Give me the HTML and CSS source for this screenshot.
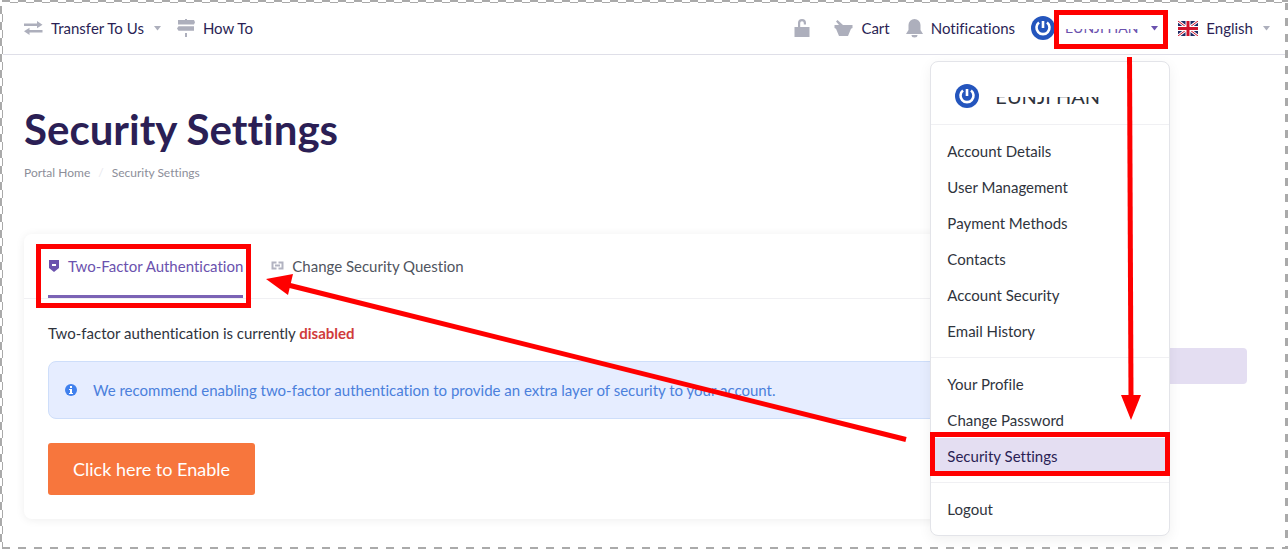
FILE: index.html
```html
<!DOCTYPE html>
<html lang="en">
<head>
    <meta charset="UTF-8">
    <meta name="viewport" content="width=device-width, initial-scale=1.0">
    <title>Security Settings</title>
    <link rel="stylesheet" href="styles.css">
</head>
<body>
    <header class="topbar">
        <nav class="nav-left">
            <a href="#" class="nav-link">
                <svg class="icon" width="19" height="14" viewBox="0 0 19 14"><path d="M0 2.500h13V0l5.500 3.700L13 7.200V5H0zM18.500 11.500h-13V14L0 10.300l5.500-3.500V9h13z"/></svg>
                <span>Transfer To Us</span>
                <svg class="caret" width="7" height="5" viewBox="0 0 7 5"><path d="M0 0h7L3.500 4.500z"/></svg>
            </a>
            <a href="#" class="nav-link">
                <svg class="icon" width="18" height="18" viewBox="0 0 18 18"><path d="M8 0h2v1h7l1 2.300-1 2.300H1V1h7zM1.500 7.200H17v4.600H1.500L0 9.500zM8 14h2v4H8z"/></svg>
                <span>How To</span>
            </a>
        </nav>
        <nav class="nav-right">
            <a href="#" class="nav-link nav-lock" aria-label="Unlock">
                <svg class="icon" width="16" height="18" viewBox="0 0 16 18"><path d="M.5 8H4V4a4 4 0 0 1 8 0v1.500H9.800V4a1.800 1.800 0 0 0-3.600 0v4h9.300v10H.5z"/></svg>
            </a>
            <a href="#" class="nav-link nav-cart">
                <svg class="icon" width="19" height="17" viewBox="0 0 19 17"><path d="M3.500 0L9 5h9.500v3l-1.500.8-3 7.200H5L2 8.800.5 8V5H5L2 1.600z"/></svg>
                <span>Cart</span>
            </a>
            <a href="#" class="nav-link nav-bell">
                <svg class="icon" width="17" height="19" viewBox="0 0 17 19"><path d="M8.500 0a6 6 0 0 1 6 6v5l2.500 4H0l2.500-4V6a6 6 0 0 1 6-6zM5.500 16h6a3 2.500 0 0 1-6 0z"/></svg>
                <span>Notifications</span>
            </a>
            <div class="account">
                <svg class="avatar" width="24" height="24" viewBox="0 0 24 24"><circle cx="12" cy="12" r="12"/><path d="M8 6.500a6.500 6.500 0 1 0 8 0M12 5v7" fill="none" stroke="#fff" stroke-width="2.600"/></svg>
                <button type="button" class="account-toggle">
                    <span class="masked">EUNJI HAN</span>
                    <svg width="7" height="5" viewBox="0 0 7 5"><path d="M0 0h7L3.500 4.500z"/></svg>
                </button>
                <div class="dropdown">
                    <div class="dropdown-head">
                        <svg class="avatar" width="24" height="24" viewBox="0 0 24 24"><circle cx="12" cy="12" r="12"/><path d="M8 6.500a6.500 6.500 0 1 0 8 0M12 5v7" fill="none" stroke="#fff" stroke-width="2.600"/></svg>
                        <span class="masked">EUNJI HAN</span>
                    </div>
                    <div class="dropdown-group">
                        <a href="#">Account Details</a>
                        <a href="#">User Management</a>
                        <a href="#">Payment Methods</a>
                        <a href="#">Contacts</a>
                        <a href="#">Account Security</a>
                        <a href="#">Email History</a>
                    </div>
                    <div class="dropdown-group">
                        <a href="#">Your Profile</a>
                        <a href="#">Change Password</a>
                        <a href="#" class="active">Security Settings</a>
                    </div>
                    <div class="dropdown-group">
                        <a href="#">Logout</a>
                    </div>
                </div>
            </div>
            <a href="#" class="nav-link nav-lang">
                <svg width="20" height="15" viewBox="0 0 20 15"><path fill="#1d2a66" d="M0 0h20v15H0z"/><path d="M0 0l20 15M20 0L0 15" stroke="#fff" stroke-width="3"/><path d="M0 0l20 15M20 0L0 15" stroke="#d0142c" stroke-width="1"/><path d="M10 0v15M0 7.500h20" stroke="#fff" stroke-width="5"/><path d="M10 0v15M0 7.500h20" stroke="#d0142c" stroke-width="3"/></svg>
                <span>English</span>
                <svg class="caret" width="7" height="5" viewBox="0 0 7 5"><path d="M0 0h7L3.500 4.500z"/></svg>
            </a>
        </nav>
    </header>

    <main class="content">
        <h1>Security Settings</h1>
        <nav class="breadcrumb">
            <a href="#">Portal Home</a>
            <span class="slash">/</span>
            <span>Security Settings</span>
        </nav>

        <div class="columns">
            <section class="card">
                <div class="tabs">
                    <a href="#" class="tab selected">
                        <svg width="12" height="12" viewBox="0 0 12 12"><path fill-rule="evenodd" d="M1 0h10v8l-5 4-5-4zM4 4v2h4V4z"/></svg>
                        <span>Two-Factor Authentication</span>
                    </a>
                    <a href="#" class="tab">
                        <svg width="13" height="9" viewBox="0 0 13 9"><path d="M5.500 1.500h-4v6h4M7.500 1.500h4v6h-4M4 4.500h5" fill="none" stroke="#b2b3c1" stroke-width="2"/></svg>
                        <span>Change Security Question</span>
                    </a>
                </div>
                <div class="card-body">
                    <p>Two-factor authentication is currently <strong>disabled</strong></p>
                    <div class="alert">
                        <svg width="12" height="12" viewBox="0 0 12 12"><circle cx="6" cy="6" r="6" fill="#4080ed"/><path fill="#fff" d="M5 2h2v2H5zM4 5h3v4h1v1H4V9h1V6H4z"/></svg>
                        <span>We recommend enabling two-factor authentication to provide an extra layer of security to your account.</span>
                    </div>
                    <button type="button" class="enable">Click here to Enable</button>
                </div>
            </section>
            <aside class="sidebar">
                <div class="sidebar-item"></div>
            </aside>
        </div>
    </main>

    <!-- red guide marks -->
    <svg class="marks" viewBox="0 0 1288 549" width="1288" height="549">
        <g fill="none" stroke="#f00" stroke-width="5">
            <rect x="1056.500" y="12.500" width="109" height="34"/>
            <rect x="38.500" y="246.500" width="210" height="59"/>
            <rect x="932.500" y="434.500" width="235" height="39"/>
            <path d="M1129.500 57l1.500 340"/>
            <path d="M906 439.500L288 285"/>
        </g>
        <path fill="#f00" d="M1121 395h20l-10 25zM266 279l27-5-5 21z"/>
    </svg>
    <div class="frame"></div>
</body>
</html>
```
FILE: styles.css
```css
* {
    box-sizing: border-box;
}

body {
    margin: 0;
    min-height: 100vh;
    font-family: Lato, sans-serif;
    font-size: 15px;
    line-height: 20px;
    font-variant-ligatures: none;
    color: #2f343d;
    background: #fff;
    overflow: hidden;
}

a {
    color: inherit;
    text-decoration: none;
}

svg {
    flex: none;
}

.topbar {
    display: flex;
    justify-content: space-between;
    height: 55px;
    padding: 2px 18px 0 24px;
    border-bottom: 1px solid #dfdfe8;
    color: #2b1f55;
}

.nav-left,
.nav-right,
.nav-link {
    display: flex;
    align-items: center;
}

.nav-left {
    gap: 16px;
}

.nav-link {
    gap: 8px;
}

.icon,
.caret {
    fill: #adafbc;
}

.nav-link .caret {
    margin-left: 2px;
}

.nav-lock {
    margin-right: 24px;
}

.nav-cart,
.nav-bell {
    margin-right: 16px;
}

.account {
    position: relative;
    display: flex;
    align-items: center;
    margin-right: 20px;
}

.avatar {
    fill: #2455bd;
}

.account-toggle {
    display: flex;
    align-items: center;
    gap: 13px;
    padding: 0 0 0 10px;
    border: 0;
    background: none;
    font: inherit;
    font-size: 14px;
    color: #6b52ae;
    fill: #6b52ae;
}

/* the upper half of the name is hidden */
.masked {
    clip-path: inset(55% 0 0 0);
}

.dropdown {
    position: absolute;
    z-index: 2;
    top: 45px;
    right: -12px;
    width: 240px;
    border: 1px solid #e3e4e9;
    border-radius: 8px;
    background: #fff;
    box-shadow: 0 4px 14px rgba(0, 0, 0, 0.06);
    color: #2f343d;
}

.dropdown-head {
    display: flex;
    align-items: center;
    gap: 16px;
    height: 62px;
    padding: 6px 24px 0;
    font-size: 20px;
}

.dropdown-group {
    padding: 8px 0;
    border-top: 1px solid #f0f0f3;
}

.dropdown-group a {
    display: block;
    padding: 8px 16px;
}

.dropdown-group .active {
    background: #e4def2;
    color: #2b1f55;
}

.content {
    padding: 49px 41px 30px 24px;
}

h1 {
    margin: 0;
    font-size: 42px;
    line-height: 50px;
    color: #2b1f55;
}

.breadcrumb {
    display: flex;
    gap: 8px;
    margin-top: 9px;
    font-size: 12px;
    color: #8c8e99;
}

.slash {
    color: #e8e8ee;
}

.columns {
    display: grid;
    grid-template-columns: 1fr 240px;
    gap: 24px;
    margin-top: 51px;
}

.card {
    border-radius: 8px;
    box-shadow: 0 1px 10px rgba(0, 0, 0, 0.07);
}

.tabs {
    display: flex;
    gap: 28px;
    padding: 0 24px;
    border-bottom: 1px solid #f0f0f3;
}

.tab {
    display: flex;
    align-items: center;
    gap: 8px;
    height: 64px;
    padding-top: 2px;
    border-bottom: 3px solid transparent;
    color: #505560;
}

.selected {
    border-color: #7b63b5;
    color: #6b52ae;
    fill: #6b52ae;
}

.card-body {
    padding: 24px;
}

p {
    margin: 0;
}

strong {
    color: #d03b3b;
}

.alert {
    display: flex;
    align-items: center;
    gap: 16px;
    height: 58px;
    margin: 18px 0 24px;
    padding: 0 16px;
    border: 1px solid #cedefa;
    border-radius: 8px;
    background: #e6edff;
    color: #4b80dc;
}

.enable {
    display: block;
    height: 52px;
    padding: 0 25px;
    border: 0;
    border-radius: 3px;
    background: #f7763d;
    color: #fff;
    font: 18px/24px Lato, sans-serif;
}

.sidebar {
    padding-top: 114px;
}

.sidebar-item {
    height: 36px;
    border-radius: 4px;
    background: #e4def2;
}

.marks {
    position: absolute;
    z-index: 3;
    top: 0;
    left: 0;
    pointer-events: none;
}

/* dashed edge, with a thin line in the gaps at the top and left */
.frame {
    position: absolute;
    z-index: 4;
    inset: 0;
    pointer-events: none;
    background:
        repeating-linear-gradient(90deg, #aaa 0 8px, #fff 8px 16px) 2px 0 / 100% 2px no-repeat,
        repeating-linear-gradient(90deg, #fff 0 8px, #aaa 8px 16px) 2px 2px / 100% 1px no-repeat,
        repeating-linear-gradient(90deg, #aaa 0 8px, #fff 8px 16px) 2px 100% / 100% 2px no-repeat,
        repeating-linear-gradient(#aaa 0 8px, #fff 8px 16px) 0 6px / 2px 100% no-repeat,
        repeating-linear-gradient(#fff 0 8px, #aaa 8px 16px) 2px 6px / 1px 100% no-repeat,
        repeating-linear-gradient(#aaa 0 8px, #fff 8px 16px) 100% 2px / 3px 100% no-repeat;
}
```
